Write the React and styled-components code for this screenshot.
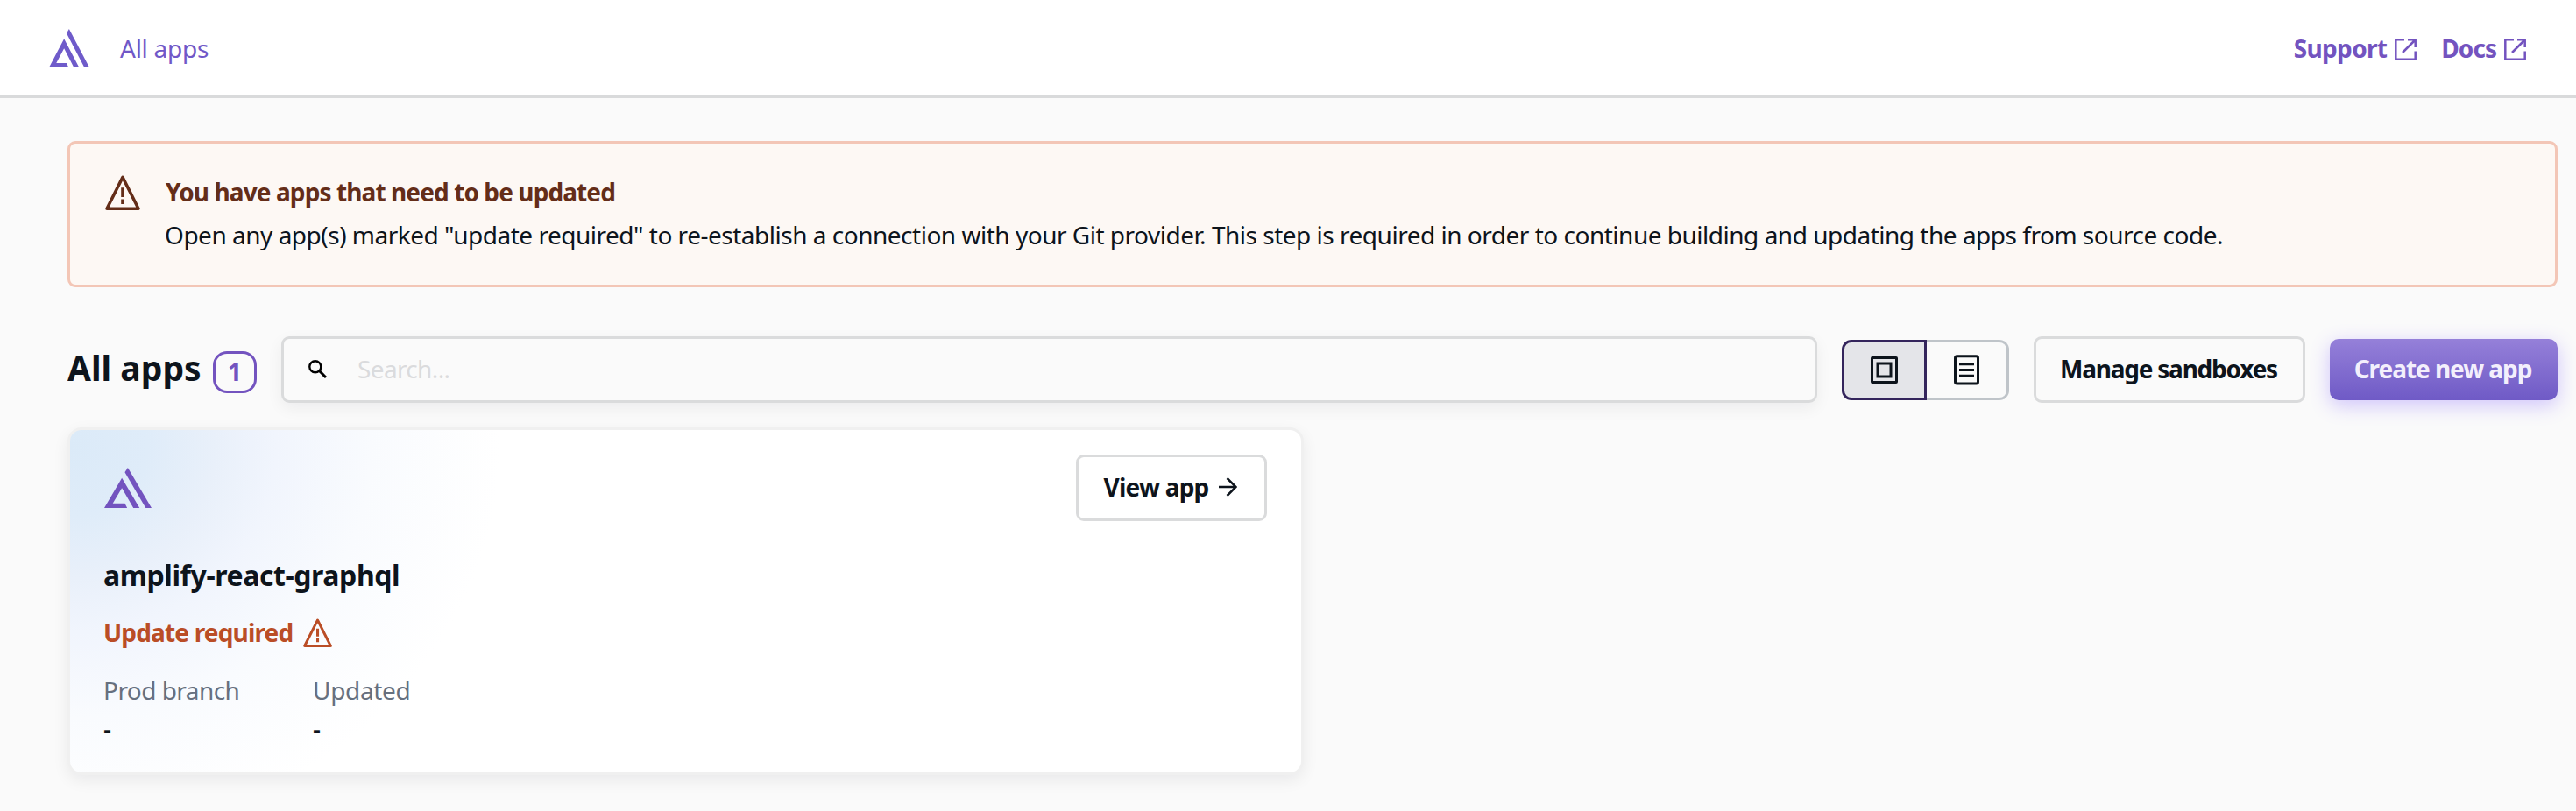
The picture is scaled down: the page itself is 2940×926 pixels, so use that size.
import React from 'react';
import styled, { createGlobalStyle } from 'styled-components';

const GlobalStyle = createGlobalStyle`
  *, *::before, *::after { box-sizing: border-box; }
  body {
    margin: 0;
    min-height: 100vh;
    background: #fafafa;
    color: #0d141c;
    font-family: 'Noto Sans', 'Open Sans', sans-serif;
    font-size: 28px;
    line-height: 38px;
  }
  svg { display: block; flex: none; }
`;

const Text = styled.span`
  font-weight: ${(p) => p.$weight || 400};
  letter-spacing: ${(p) => p.$spacing || 0}px;
  white-space: nowrap;
`;

const Header = styled.header`
  display: flex;
  align-items: center;
  justify-content: space-between;
  height: 112px;
  padding: 0 57px 0 56px;
  background: #fff;
  border-bottom: 3px solid #d9dadb;
`;

const Breadcrumb = styled.nav`
  display: flex;
  align-items: center;
  gap: 35px;
  padding-top: 1px;
  color: #7058c8;
`;

const HeaderLinks = styled.nav`
  display: flex;
  gap: 28px;
  padding-top: 1px;
`;

const HeaderLink = styled.a`
  display: flex;
  align-items: center;
  gap: 9px;
  color: #7353bf;

  svg { margin-top: 2px; }
`;

const Main = styled.main`
  padding: 49px 21px 0 77px;
`;

const Alert = styled.section`
  display: flex;
  align-items: flex-start;
  gap: 28px;
  height: 167px;
  padding: 31px 40px;
  border: 3px solid #f3c6b6;
  border-radius: 9px;
  background: #fdf8f4;
  color: #642d18;

  svg { margin-top: 5px; }
`;

const AlertBody = styled.div`
  display: flex;
  flex-direction: column;
  gap: 1px;
  line-height: 48px;
`;

const AlertTitle = styled(Text)`
  padding-left: 1px;
`;

const AlertMessage = styled(Text)`
  color: #0d141c;
`;

const Toolbar = styled.div`
  display: flex;
  align-items: center;
  gap: 28px;
  height: 76px;
  margin: 56px 0 28px;
`;

const Heading = styled.div`
  display: flex;
  align-items: center;
  gap: 15px;
  width: 216px;
`;

const Title = styled.h1`
  flex: 1;
  margin: 0;
  padding-bottom: 4px;
  font-size: 39px;
  font-weight: 700;
  line-height: 54px;
  white-space: nowrap;
`;

const CountBadge = styled.span`
  flex: none;
  width: 50px;
  height: 48px;
  margin-top: 6px;
  margin-left: -15px;
  border: 3px solid #7353bf;
  border-radius: 16px;
  color: #7353bf;
  font-weight: 700;
  line-height: 40px;
  text-align: center;
`;

const SearchField = styled.div`
  display: flex;
  flex: 1;
  align-items: center;
  gap: 35px;
  height: 76px;
  padding: 0 28px 2px;
  border: 3px solid #dadbdc;
  border-radius: 9px;
  color: #dadbdd;
  box-shadow: 0 6px 18px rgba(13, 20, 28, 0.06);
`;

const ViewToggle = styled.div`
  display: flex;
  height: 69px;
  margin-top: 1px;
`;

const ToggleOption = styled.button`
  display: flex;
  align-items: center;
  justify-content: center;
  width: ${(p) => (p.$selected ? 97 : 94)}px;
  padding: 0;
  border: 3px solid ${(p) => (p.$selected ? '#34255c' : '#bfc4c9')};
  border-left-width: ${(p) => (p.$selected ? 3 : 0)}px;
  border-radius: ${(p) => (p.$selected ? '11px 0 0 11px' : '0 11px 11px 0')};
  background: ${(p) => (p.$selected ? '#e4e5e9' : '#fafafa')};
`;

const Button = styled.button`
  display: flex;
  align-items: center;
  justify-content: center;
  gap: 12px;
  width: ${(p) => p.$width}px;
  height: 76px;
  padding: 0 2px 2px 0;
  border: 3px solid #dadbdc;
  border-radius: 9px;
  background: transparent;
  color: #0d141c;
  font: inherit;
`;

const PrimaryButton = styled(Button)`
  height: 70px;
  border: 0;
  border-radius: 10px;
  background: linear-gradient(#9580d9, #6f5ac6);
  color: #f3effc;
  box-shadow: 0 6px 22px rgba(118, 84, 255, 0.32);
`;

const CardGrid = styled.div`
  display: grid;
  grid-template-columns: 1fr 1fr;
  gap: 20px;
`;

const AppCard = styled.article`
  height: 397px;
  padding: 28px 39px 0 38px;
  border: 3px solid #f0f0f0;
  border-radius: 16px;
  background: radial-gradient(
      ellipse 490px 440px at 0 20px,
      #dbeaf8 0%,
      #dfecf9 18%,
      #e9f0fa 34%,
      #f1f5fd 48%,
      #f9fbfe 70%,
      #fff 100%
    )
    #fff;
  box-shadow: 0 6px 18px rgba(13, 20, 28, 0.07);
`;

const CardTop = styled.div`
  display: flex;
  align-items: center;
  justify-content: space-between;
  padding-left: 1px;
`;

const AppName = styled.h2`
  margin: 37px 0 22px;
  font-size: 32px;
  font-weight: 700;
  line-height: 49px;
  letter-spacing: -0.42px;
`;

const Status = styled.div`
  display: flex;
  align-items: center;
  gap: 12px;
  color: #ba4d26;
`;

const Facts = styled.dl`
  display: grid;
  grid-template-columns: 239px 238px;
  row-gap: 6px;
  margin: 28px 0 0;
`;

const FactLabel = styled.dt`
  color: #66707f;
`;

const FactValue = styled.dd`
  margin: 0;
  font-weight: 500;
`;

const AmplifyLogo = ({ width, height, color }) => (
  <svg width={width} height={height} viewBox="0 0 161 138" preserveAspectRatio="none" fill={color}>
    <path d="M60 35 120 138H99L60 70 29 122H70L78 138H0Z" />
    <path d="M70 16 80 0 161 138H141Z" />
  </svg>
);

const WarningIcon = ({ size }) => (
  <svg width={size} height={size} viewBox="0 0 40 40" fill="none">
    <path d="M20 2.4 38 38.2H2Z" stroke="currentColor" strokeWidth="3.5" strokeLinejoin="round" />
    <path d="M18.2 14.3h3.7V25h-3.7zM18.2 27.5h3.7V33h-3.7z" fill="currentColor" />
  </svg>
);

const ExternalIcon = () => (
  <svg width="25" height="25" viewBox="0 0 25 25" fill="none" stroke="currentColor" strokeWidth="2.5">
    <path d="M11 1.3H1.3V23.7H23.7V14.5M15 1.3H23.7V10M23.5 1.5 9 16" />
  </svg>
);

const SearchIcon = () => (
  <svg width="21" height="21" viewBox="0 0 21 21" fill="none" stroke="#000" strokeWidth="2.4">
    <circle cx="7.8" cy="7.8" r="6.5" />
    <path d="M12.4 12.4 20 20" strokeWidth="3" />
  </svg>
);

const CardViewIcon = () => (
  <svg width="31" height="31" viewBox="0 0 31 31" fill="none" stroke="#0d141c" strokeWidth="3">
    <rect x="1.5" y="1.5" width="28" height="28" rx="0.5" />
    <rect x="8" y="8" width="15" height="15" />
  </svg>
);

const ListViewIcon = () => (
  <svg width="29" height="35" viewBox="0 0 29 35" fill="none" stroke="#0d141c" strokeWidth="3">
    <rect x="1.5" y="1.7" width="26" height="31.4" rx="2" />
    <path d="M6 10.8H23M6 17.5H23M6 24.2H23" />
  </svg>
);

const ArrowIcon = () => (
  <svg width="21" height="22" viewBox="0 0 21 22" fill="none" stroke="currentColor" strokeWidth="2.5">
    <path d="M0 11H20M9.5 1 19.6 11 9.5 21" />
  </svg>
);

export default function App() {
  return (
    <>
      <GlobalStyle />
      <Header>
        <Breadcrumb>
          <AmplifyLogo width={46} height={44} color="#6f5bca" />
          <Text $spacing={-0.26}>All apps</Text>
        </Breadcrumb>
        <HeaderLinks>
          <HeaderLink>
            <Text $weight={700} $spacing={-0.67}>Support</Text>
            <ExternalIcon />
          </HeaderLink>
          <HeaderLink>
            <Text $weight={700} $spacing={-0.95}>Docs</Text>
            <ExternalIcon />
          </HeaderLink>
        </HeaderLinks>
      </Header>
      <Main>
        <Alert>
          <WarningIcon size={40} />
          <AlertBody>
            <AlertTitle $weight={700} $spacing={-0.9}>You have apps that need to be updated</AlertTitle>
            <AlertMessage $spacing={-0.49}>
              Open any app(s) marked "update required" to re-establish a connection with your Git
              provider. This step is required in order to continue building and updating the apps
              from source code.
            </AlertMessage>
          </AlertBody>
        </Alert>
        <Toolbar>
          <Heading>
            <Title>All apps</Title>
            <CountBadge>1</CountBadge>
          </Heading>
          <SearchField>
            <SearchIcon />
            <Text $spacing={-0.64}>Search...</Text>
          </SearchField>
          <ViewToggle>
            <ToggleOption $selected>
              <CardViewIcon />
            </ToggleOption>
            <ToggleOption>
              <ListViewIcon />
            </ToggleOption>
          </ViewToggle>
          <Button $width={310}>
            <Text $weight={700} $spacing={-1.23}>Manage sandboxes</Text>
          </Button>
          <PrimaryButton $width={260}>
            <Text $weight={700} $spacing={-1.05}>Create new app</Text>
          </PrimaryButton>
        </Toolbar>
        <CardGrid>
          <AppCard>
            <CardTop>
              <AmplifyLogo width={54} height={46} color="#7353bf" />
              <Button $width={218}>
                <Text $weight={700} $spacing={-0.77}>View app</Text>
                <ArrowIcon />
              </Button>
            </CardTop>
            <AppName>amplify-react-graphql</AppName>
            <Status>
              <Text $weight={700} $spacing={-0.83}>Update required</Text>
              <WarningIcon size={33} />
            </Status>
            <Facts>
              <FactLabel><Text $spacing={-0.55}>Prod branch</Text></FactLabel>
              <FactLabel><Text $spacing={-0.33}>Updated</Text></FactLabel>
              <FactValue>-</FactValue>
              <FactValue>-</FactValue>
            </Facts>
          </AppCard>
        </CardGrid>
      </Main>
    </>
  );
}
